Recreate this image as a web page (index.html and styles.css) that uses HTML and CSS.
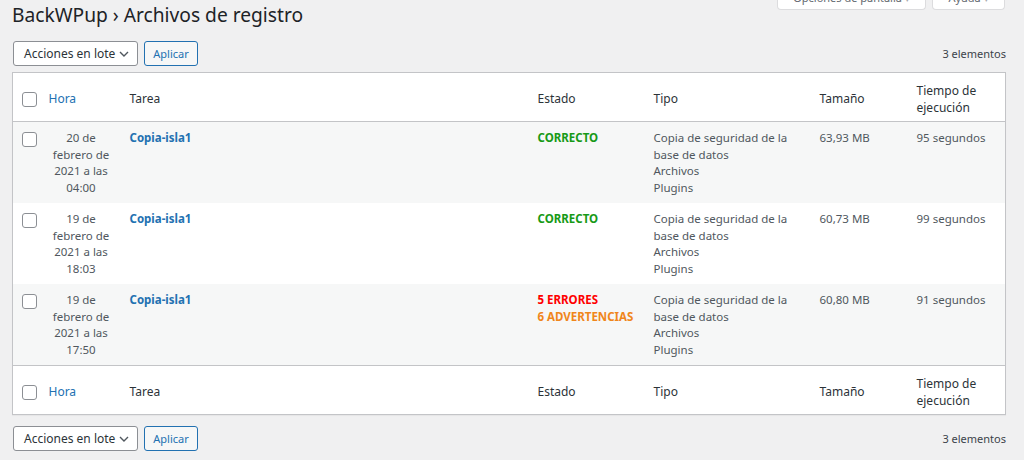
FILE: index.html
```html
<!DOCTYPE html>
<html lang="es">
<head>
<meta charset="utf-8">
<title>BackWPup › Archivos de registro</title>
<link rel="stylesheet" href="styles.css">
</head>
<body>
<div class="wrap">
  <div class="head">
    <h1 class="title">BackWPup › Archivos de registro</h1>
    <div class="meta-links">
      <span class="meta-tab tab-options">Opciones de pantalla <span class="caret">▾</span></span>
      <span class="meta-tab tab-help">Ayuda <span class="caret">▾</span></span>
    </div>
  </div>

  <div class="tablenav nav-top">
    <div class="select">Acciones en lote
      <svg class="chev" width="10" height="6" viewBox="0 0 10 6"><path d="M1 1l4 4 4-4" fill="none" stroke="#50575e" stroke-width="1.4"/></svg>
    </div>
    <span class="button">Aplicar</span>
    <span class="count">3 elementos</span>
  </div>

  <table class="logs">
    <colgroup>
      <col class="c-cb"><col class="c-time"><col class="c-job"><col class="c-status"><col class="c-type"><col class="c-size"><col class="c-run">
    </colgroup>
    <thead>
      <tr>
        <td class="cb"><span class="checkbox"></span></td>
        <th><a class="sort">Hora</a></th>
        <th>Tarea</th>
        <th>Estado</th>
        <th>Tipo</th>
        <th>Tamaño</th>
        <th>Tiempo de ejecución</th>
      </tr>
    </thead>
    <tbody>
      <tr class="alt">
        <td class="cb"><span class="checkbox"></span></td>
        <td class="date">20 de febrero de 2021 a las 04:00</td>
        <td><a class="job">Copia-isla1</a></td>
        <td><span class="ok">CORRECTO</span></td>
        <td>Copia de seguridad de la base de datos<br>Archivos<br>Plugins</td>
        <td>63,93 MB</td>
        <td>95 segundos</td>
      </tr>
      <tr>
        <td class="cb"><span class="checkbox"></span></td>
        <td class="date">19 de febrero de 2021 a las 18:03</td>
        <td><a class="job">Copia-isla1</a></td>
        <td><span class="ok">CORRECTO</span></td>
        <td>Copia de seguridad de la base de datos<br>Archivos<br>Plugins</td>
        <td>60,73 MB</td>
        <td>99 segundos</td>
      </tr>
      <tr class="alt">
        <td class="cb"><span class="checkbox"></span></td>
        <td class="date">19 de febrero de 2021 a las 17:50</td>
        <td><a class="job">Copia-isla1</a></td>
        <td><span class="err">5 ERRORES</span><br><span class="warn">6 ADVERTENCIAS</span></td>
        <td>Copia de seguridad de la base de datos<br>Archivos<br>Plugins</td>
        <td>60,80 MB</td>
        <td>91 segundos</td>
      </tr>
    </tbody>
    <tfoot>
      <tr>
        <td class="cb"><span class="checkbox"></span></td>
        <th><a class="sort">Hora</a></th>
        <th>Tarea</th>
        <th>Estado</th>
        <th>Tipo</th>
        <th>Tamaño</th>
        <th>Tiempo de ejecución</th>
      </tr>
    </tfoot>
  </table>

  <div class="tablenav nav-bottom">
    <div class="select">Acciones en lote
      <svg class="chev" width="10" height="6" viewBox="0 0 10 6"><path d="M1 1l4 4 4-4" fill="none" stroke="#50575e" stroke-width="1.4"/></svg>
    </div>
    <span class="button">Aplicar</span>
    <span class="count">3 elementos</span>
  </div>
</div>
</body>
</html>
```

FILE: styles.css
```css
html, body {
  margin: 0;
  padding: 0;
  background: #f0f0f1;
}
body {
  font-family: "Noto Sans", "Open Sans", sans-serif;
  font-size: 11.5px;
  color: #3c434a;
}
.wrap {
  padding: 0 18px 0 12px;
}
.head {
  display: flex;
  justify-content: space-between;
  align-items: flex-start;
  height: 37px;
}
.title {
  margin: 3px 0 0 0;
  font-size: 19.2px;
  font-weight: 400;
  line-height: 24px;
  color: #1d2327;
}
.meta-links {
  display: flex;
  gap: 6px;
  margin-top: -8px;
  margin-right: 1px;
}
.meta-tab {
  display: block;
  box-sizing: border-box;
  height: 18px;
  padding: 0 8px;
  background: #fff;
  border: 1px solid #dcdcde;
  border-top: none;
  border-radius: 0 0 4px 4px;
  font-size: 11px;
  line-height: 12px;
  white-space: nowrap;
  color: #646970;
  text-align: center;
}
.tab-options { width: 149px; }
.tab-help { width: 73px; }
.caret { color: #a7aaad; font-size: 9px; }

.tablenav {
  display: flex;
  align-items: center;
  gap: 6px;
  padding-left: 1px;
}
.nav-top { height: 25px; margin-top: 4px; margin-bottom: 6px; }
.nav-bottom { height: 25px; margin-top: 11px; }

.select {
  box-sizing: border-box;
  width: 125px;
  height: 25px;
  display: flex;
  align-items: center;
  justify-content: space-between;
  padding: 0 8px 0 10px;
  background: #fff;
  border: 1px solid #8c8f94;
  border-radius: 3px;
  font-size: 12px;
  color: #2c3338;
}
.chev { margin-top: 1px; }
.button {
  box-sizing: border-box;
  height: 25px;
  width: 54px;
  display: flex;
  align-items: center;
  justify-content: center;
  background: #f6f7f7;
  border: 1px solid #2271b1;
  border-radius: 3px;
  color: #2271b1;
  font-size: 11px;
}
.count {
  margin-left: auto;
  font-size: 11px;
  color: #3c434a;
}

.logs {
  width: 994px;
  border-collapse: collapse;
  table-layout: fixed;
  background: #fff;
  border: 1px solid #c3c4c7;
  box-shadow: 0 1px 1px rgba(0,0,0,.04);
}
.c-cb { width: 28px; }
.c-time { width: 81px; }
.c-job { width: 408px; }
.c-status { width: 116px; }
.c-type { width: 166px; }
.c-size { width: 97px; }
.c-run { width: auto; }

.logs th, .logs td {
  text-align: left;
  vertical-align: top;
  padding: 8px 8px 7px 8px;
  line-height: 16.5px;
  font-weight: 400;
}
.logs thead th, .logs tfoot th, .logs thead td, .logs tfoot td {
  vertical-align: middle;
  color: #2c3338;
  font-size: 12px;
  height: 33px;
  padding-top: 10px;
  padding-bottom: 5px;
}
.logs thead tr { border-bottom: 1px solid #c3c4c7; }
.logs tfoot tr { border-top: 1px solid #c3c4c7; }
.logs tbody td {
  color: #50575e;
}
.logs tbody tr.alt { background: #f6f7f7; }
.logs td.cb {
  padding: 0 0 0 9px;
}
.logs thead td.cb, .logs tfoot td.cb { padding-top: 4px; padding-bottom: 0; }
.logs tbody td.cb { padding-top: 10px; }
.checkbox {
  display: block;
  box-sizing: border-box;
  width: 15px;
  height: 15px;
  border: 1px solid #8c8f94;
  border-radius: 3px;
  background: #fff;
}
.logs td.date { text-align: center; }
.sort { color: #2271b1; }
.job { color: #2271b1; font-weight: 700; }
.ok { color: #179a17; font-weight: 700; }
.err { color: #f00; font-weight: 700; }
.warn { color: #f0861b; font-weight: 700; }
```
